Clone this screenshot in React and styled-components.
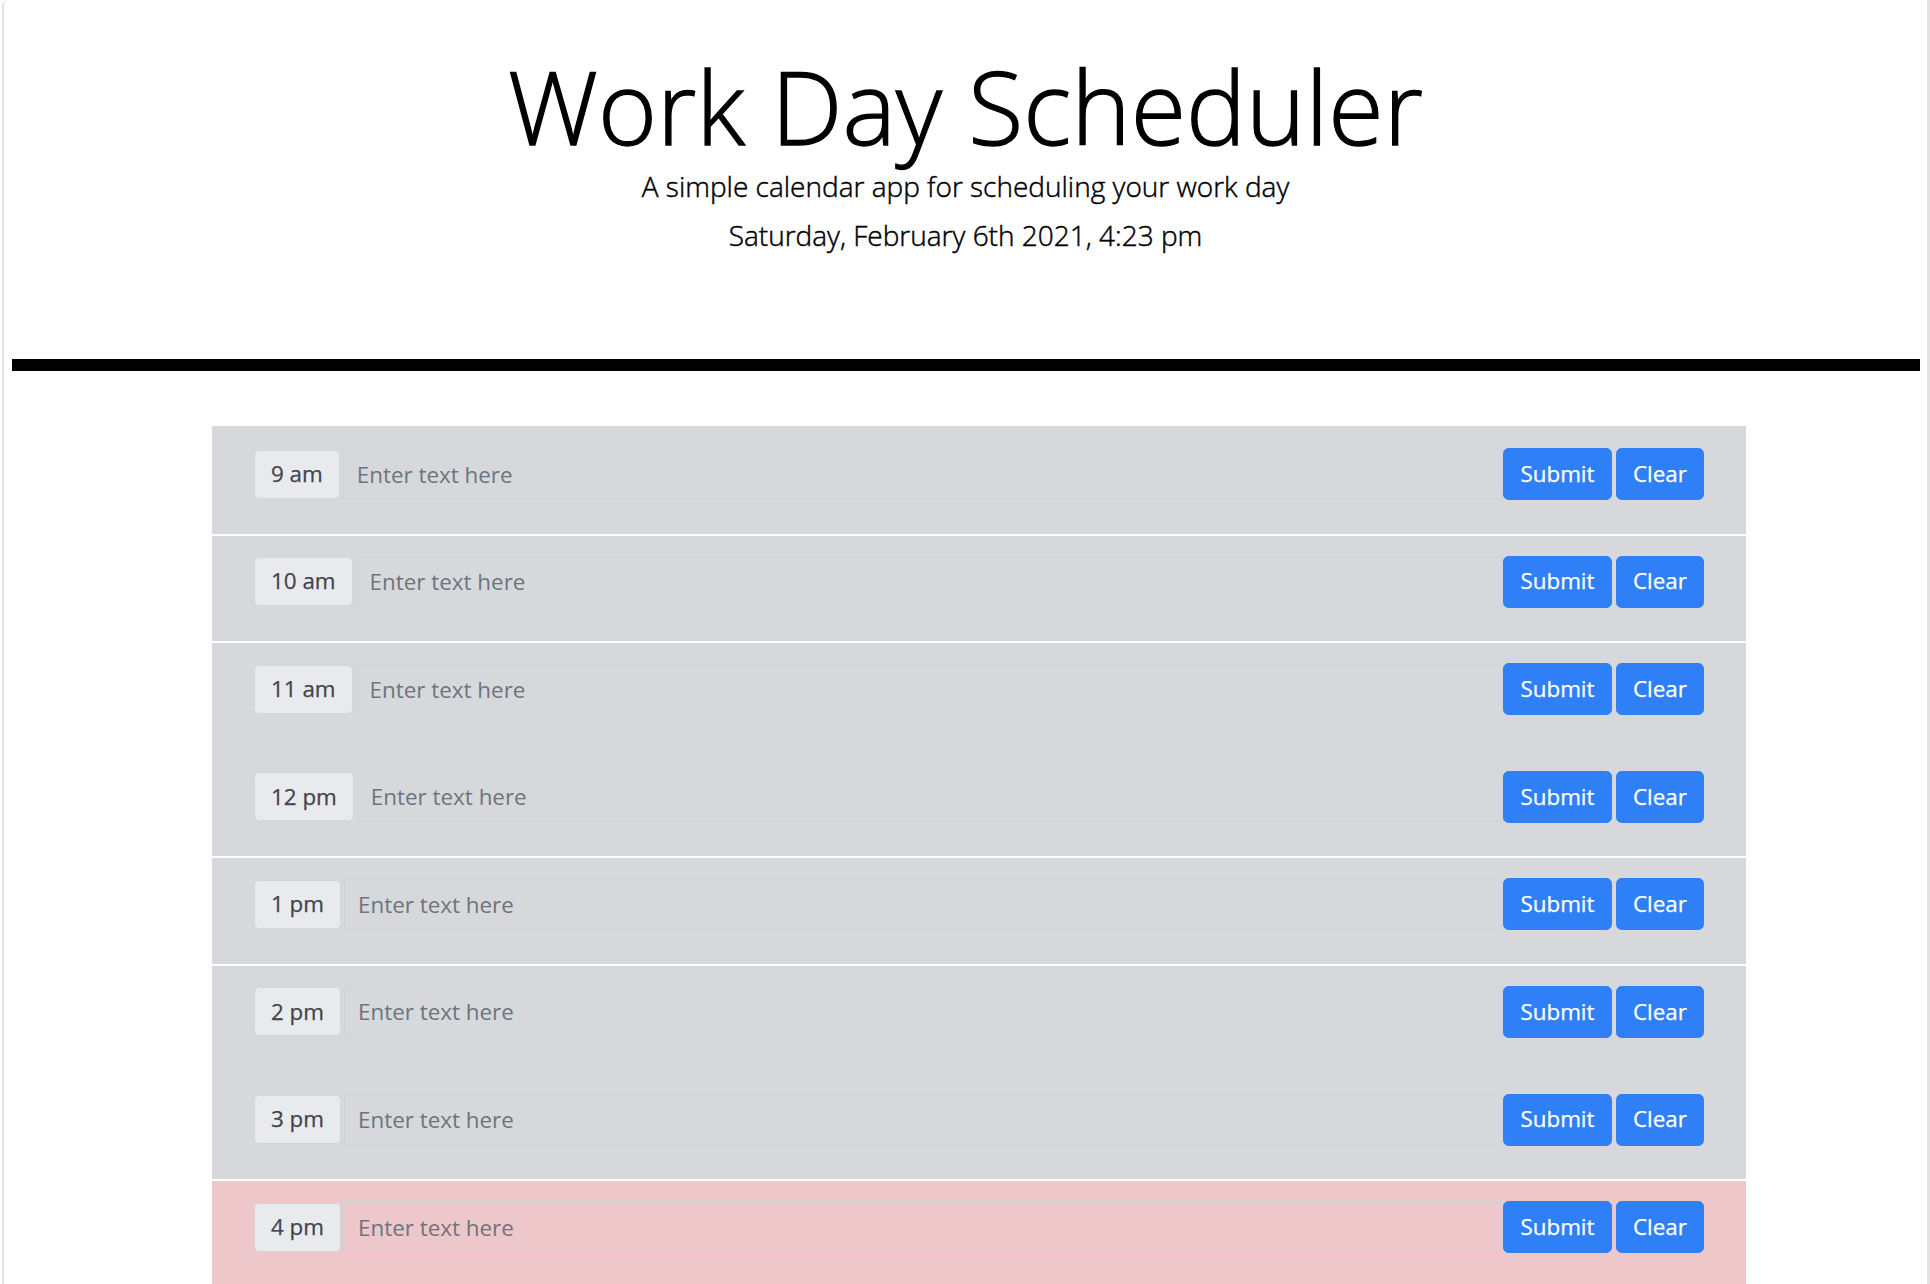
import React from "react";
import styled, { createGlobalStyle } from "styled-components";

const GlobalStyle = createGlobalStyle`
  html, body {
    margin: 0;
    padding: 0;
    background: #ffffff;
  }
  body {
    font-family: "Open Sans", "Liberation Sans", sans-serif;
    color: #000;
  }
  * { box-sizing: border-box; }
`;

const Frame = styled.div`
  min-height: 1284px;
  margin-left: 2px;
  border-left: 2px solid #e3e3e5;
  border-right: 3px solid #e3e3e5;
  border-top-left-radius: 6px;
  display: flex;
  flex-direction: column;
`;

const Header = styled.header`
  display: flex;
  flex-direction: column;
  align-items: center;
  padding-top: 46px;
  text-align: center;
`;

const Title = styled.h1`
  margin: 0;
  font-size: 100.8px;
  font-weight: 300;
  line-height: 121px;
  color: #000;
  -webkit-text-stroke: 1.3px #000;
`;

const Lead = styled.p`
  margin: ${(p) => p.$top}px 0 0;
  font-size: 28px;
  font-weight: 300;
  line-height: 42px;
  color: #000;
  -webkit-text-stroke: 0.45px #000;
`;

const Bar = styled.hr`
  margin: 103px 7px 0 8px;
  height: 12px;
  border: 0;
  background: #000;
`;

const Schedule = styled.main`
  margin: 55px 0 0 208px;
  width: 1534px;
  display: flex;
  flex-direction: column;
`;

const Row = styled.section`
  display: flex;
  align-items: center;
  padding: 20px 42px 33.6px;
  background: ${(p) => (p.$present ? "#eec7cb" : "#d7d8dc")};
  border-top: 2px solid ${(p) => (p.$split ? "#ffffff" : p.$present ? "#eec7cb" : "#d7d8dc")};
`;

const Hour = styled.span`
  display: flex;
  align-items: center;
  height: 49px;
  padding: 0 16px;
  background: #e9eaee;
  border: 1px solid #d4d6da;
  border-radius: 5px;
  color: #3f454b;
  font-size: 22.4px;
  line-height: 1;
  white-space: nowrap;
  -webkit-text-stroke: 0.25px #3f454b;
`;

const Entry = styled.input`
  flex: 1;
  min-width: 0;
  height: 50px;
  margin-left: 3px;
  padding: 0 13px;
  background: transparent;
  border: 1px solid #cfd3d7;
  border-radius: 0;
  font-family: inherit;
  font-size: 22.4px;
  color: #495057;
  outline: none;
  &::placeholder {
    color: #6c757d;
  }
`;

const Button = styled.button`
  height: 52px;
  padding: 0 16.2px;
  margin-left: ${(p) => (p.$gap ? "4px" : "0")};
  background: #2f80f6;
  border: 1px solid #2f80f6;
  border-radius: 5.6px;
  color: #ffffff;
  font-family: inherit;
  font-size: 22.4px;
  line-height: 1;
  cursor: pointer;
  -webkit-text-stroke: 0.25px #ffffff;
`;

const hours = [
  { label: "9 am", split: false },
  { label: "10 am", split: true },
  { label: "11 am", split: true },
  { label: "12 pm", split: false },
  { label: "1 pm", split: true },
  { label: "2 pm", split: true },
  { label: "3 pm", split: false },
  { label: "4 pm", split: true, present: true },
];

export default function App() {
  return (
    <>
      <GlobalStyle />
      <Frame>
        <Header>
          <Title>Work Day Scheduler</Title>
          <Lead $top={-2}>A simple calendar app for scheduling your work day</Lead>
          <Lead $top={7}>Saturday, February 6th 2021, 4:23 pm</Lead>
        </Header>
        <Bar />
        <Schedule>
          {hours.map((h) => (
            <Row key={h.label} $split={h.split} $present={h.present}>
              <Hour>{h.label}</Hour>
              <Entry placeholder="Enter text here" />
              <Button>Submit</Button>
              <Button $gap>Clear</Button>
            </Row>
          ))}
        </Schedule>
      </Frame>
    </>
  );
}
